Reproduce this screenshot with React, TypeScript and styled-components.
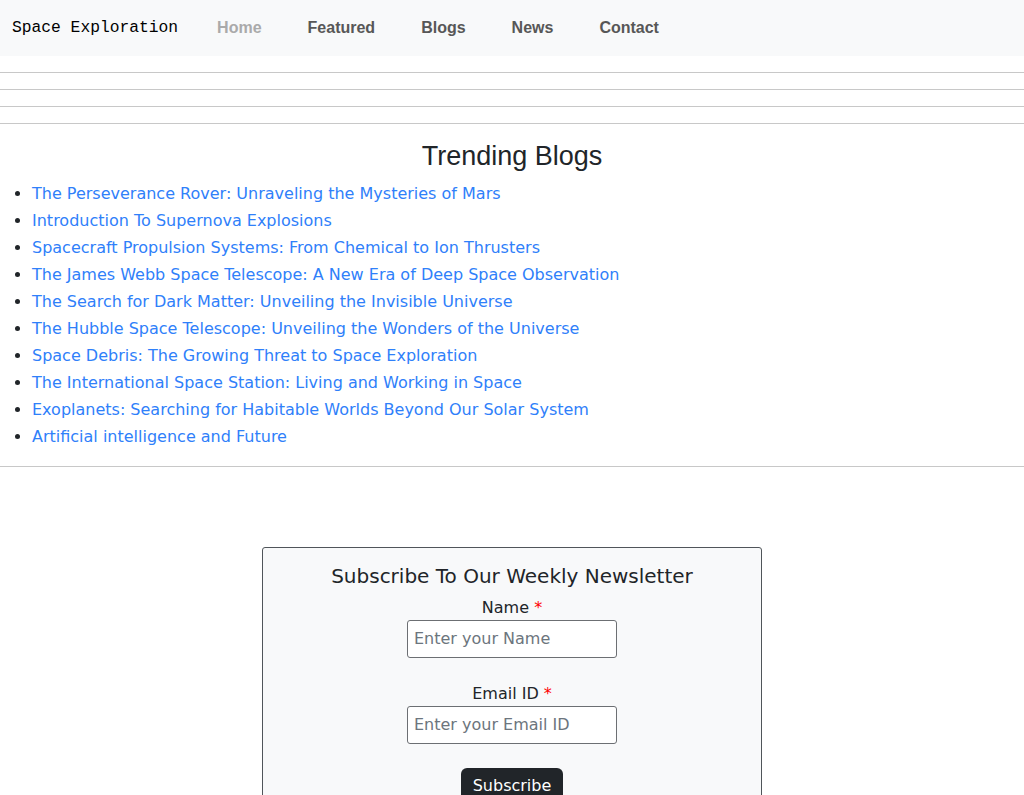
import React from "react";
import styled, { createGlobalStyle } from "styled-components";

const GlobalStyle = createGlobalStyle`
  html, body { margin: 0; padding: 0; background: #fff; }
  body {
    font-family: "DejaVu Sans", sans-serif;
    font-size: 16px;
    line-height: 1.5;
    color: #212529;
  }
  * { box-sizing: border-box; }
`;

const NavBar = styled.nav`
  height: 56px;
  background: #f8f9fa;
  display: flex;
  align-items: center;
  padding: 0 12px;
`;

const Brand = styled.span`
  font-family: "Liberation Mono", monospace;
  font-size: 16.3px;
  color: #000;
  margin-right: 39px;
`;

const NavList = styled.div`
  display: flex;
  gap: 46px;
`;

const NavLink = styled.a<{ $active?: boolean }>`
  font-family: "Liberation Sans", Arial, sans-serif;
  font-weight: bold;
  font-size: 16px;
  text-decoration: none;
  color: ${(p) => (p.$active ? "#aaaaaa" : "#575757")};
`;

const Rule = styled.hr`
  margin: 16px 0;
  border: 0;
  border-top: 1px solid #c8c8c8;
  height: 0;
`;

const Heading = styled.h2`
  font-family: "Liberation Sans", Arial, sans-serif;
  font-weight: 400;
  font-size: 27px;
  line-height: 1.2;
  text-align: center;
  margin: 0 0 8px;
  color: #212529;
`;

const BlogList = styled.ul`
  margin: 0 0 16px;
  padding-left: 32px;
`;

const BlogItem = styled.li`
  line-height: 27px;
`;

const BlogLink = styled.a`
  color: #2f80fa;
  text-decoration: none;
`;

const NewsBox = styled.section`
  width: 500px;
  margin: 80px auto 0;
  border: 1px solid #50555a;
  border-radius: 3px;
  background: #f8f9fa;
  padding: 16px 0 40px;
  display: flex;
  flex-direction: column;
  align-items: center;
`;

const NewsTitle = styled.h5`
  font-size: 20px;
  font-weight: 400;
  line-height: 1.2;
  margin: 0 0 8px;
`;

const Field = styled.div`
  display: flex;
  flex-direction: column;
  align-items: center;
  margin-bottom: 24px;
`;

const Label = styled.label`
  font-size: 16px;
  line-height: 24px;
  margin-bottom: 0;
`;

const Required = styled.span`
  color: red;
`;

const Input = styled.input`
  width: 210px;
  height: 38px;
  padding: 5px 6px 7px;
  font-family: "DejaVu Sans", sans-serif;
  font-size: 16px;
  border: 1px solid #6c6f73;
  border-radius: 3px;
  background: #fff;
  color: #212529;
  &::placeholder { color: #6c757d; }
`;

const Button = styled.button`
  background: #212529;
  color: #fff;
  border: 0;
  border-radius: 6px;
  padding: 6px 12px;
  font-family: "DejaVu Sans", sans-serif;
  font-size: 16px;
  line-height: 24px;
`;

const blogs = [
  "The Perseverance Rover: Unraveling the Mysteries of Mars",
  "Introduction To Supernova Explosions",
  "Spacecraft Propulsion Systems: From Chemical to Ion Thrusters",
  "The James Webb Space Telescope: A New Era of Deep Space Observation",
  "The Search for Dark Matter: Unveiling the Invisible Universe",
  "The Hubble Space Telescope: Unveiling the Wonders of the Universe",
  "Space Debris: The Growing Threat to Space Exploration",
  "The International Space Station: Living and Working in Space",
  "Exoplanets: Searching for Habitable Worlds Beyond Our Solar System",
  "Artificial intelligence and Future",
];

export default function App() {
  return (
    <>
      <GlobalStyle />
      <NavBar>
        <Brand>Space Exploration</Brand>
        <NavList>
          <NavLink $active href="#">Home</NavLink>
          <NavLink href="#">Featured</NavLink>
          <NavLink href="#">Blogs</NavLink>
          <NavLink href="#">News</NavLink>
          <NavLink href="#">Contact</NavLink>
        </NavList>
      </NavBar>
      <Rule />
      <Rule />
      <Rule />
      <Rule />
      <Heading>Trending Blogs</Heading>
      <BlogList>
        {blogs.map((b) => (
          <BlogItem key={b}>
            <BlogLink href="#">{b}</BlogLink>
          </BlogItem>
        ))}
      </BlogList>
      <Rule />
      <NewsBox>
        <NewsTitle>Subscribe To Our Weekly Newsletter</NewsTitle>
        <Field>
          <Label>
            Name <Required>*</Required>
          </Label>
          <Input placeholder="Enter your Name" />
        </Field>
        <Field>
          <Label>
            Email ID <Required>*</Required>
          </Label>
          <Input placeholder="Enter your Email ID" />
        </Field>
        <Button>Subscribe</Button>
      </NewsBox>
    </>
  );
}
